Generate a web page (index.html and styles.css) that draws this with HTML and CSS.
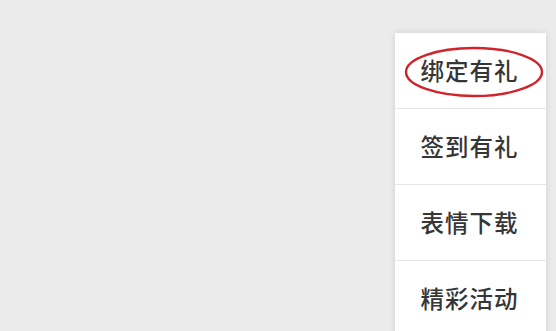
FILE: index.html
```html
<!DOCTYPE html>
<html lang="zh">
<head>
<meta charset="utf-8">
<link rel="stylesheet" href="styles.css">
</head>
<body>
<div class="screen">
  <div class="menu">
    <div class="item first">
      <span class="label">绑定有礼</span>
      <svg class="circle" width="140" height="52" viewBox="0 0 140 52"><ellipse cx="70" cy="26" rx="68" ry="24" fill="none" stroke="#d0232a" stroke-width="2.4"/></svg>
    </div>
    <div class="item"><span class="label">签到有礼</span></div>
    <div class="item"><span class="label">表情下载</span></div>
    <div class="item"><span class="label">精彩活动</span></div>
  </div>
</div>
</body>
</html>
```
FILE: styles.css
```css
html, body {
  margin: 0;
  padding: 0;
  background: #ebebeb;
  overflow: hidden;
}
.screen {
  width: 556px;
  height: 331px;
  display: flex;
  justify-content: flex-end;
  align-items: flex-start;
  padding-top: 33px;
  padding-right: 10px;
  box-sizing: border-box;
  overflow: hidden;
}
.menu {
  width: 151px;
  background: #ffffff;
  box-shadow: 0 0 6px rgba(0, 0, 0, 0.12);
  display: flex;
  flex-direction: column;
  flex-shrink: 0;
}
.item {
  position: relative;
  height: 75px;
  border-bottom: 1px solid #e6e6e6;
  display: flex;
  align-items: center;
  justify-content: center;
  padding-right: 2px;
  box-sizing: content-box;
}
.label {
  font-family: "Noto Sans CJK SC", "Noto Sans", sans-serif;
  font-size: 23.5px;
  font-weight: 500;
  color: #363636;
  letter-spacing: 1px;
  position: relative;
  top: -1px;
}
.circle {
  position: absolute;
  left: 9px;
  top: 13px;
}
```
